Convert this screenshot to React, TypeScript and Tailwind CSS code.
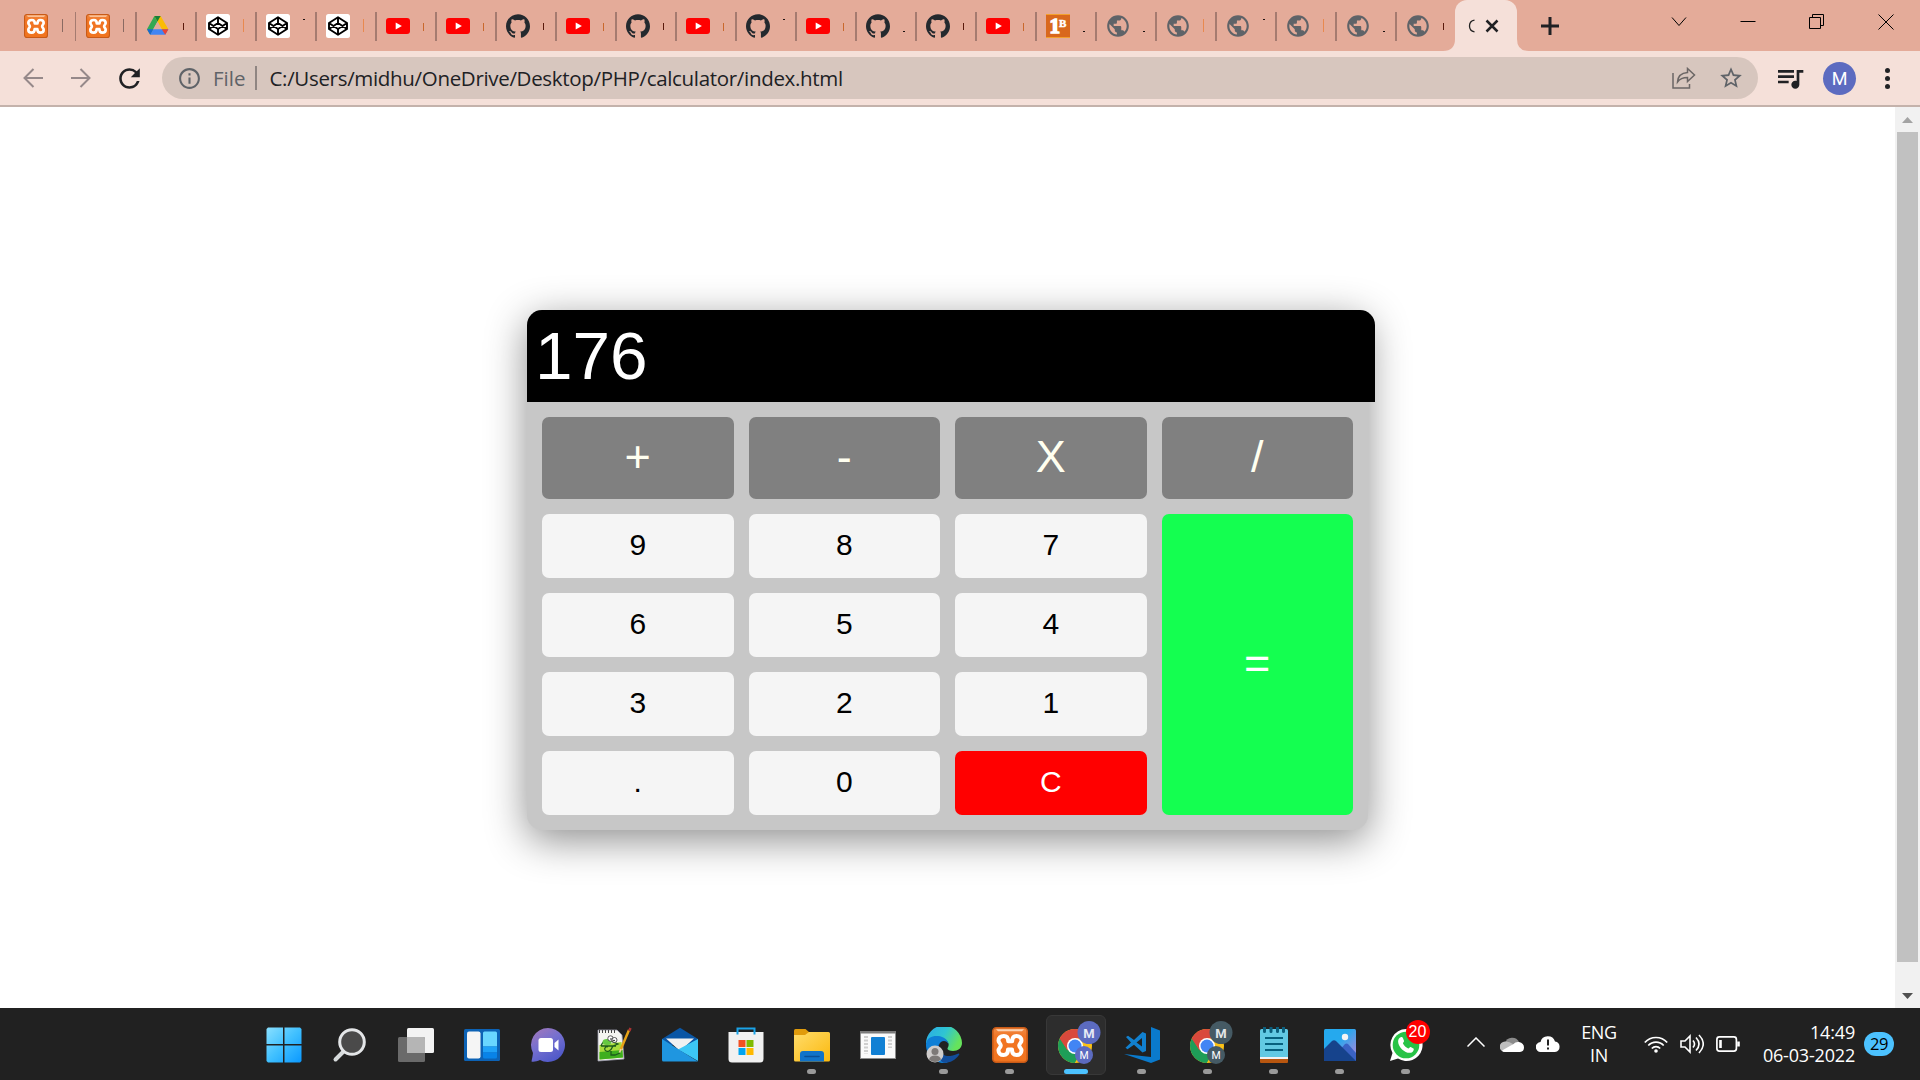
import React from "react";
import { SiGithub } from "react-icons/si";
import { MdPublic, MdQueueMusic, MdStarBorder, MdInfoOutline, MdRefresh } from "react-icons/md";

type Kind = "xampp" | "drive" | "codepen" | "youtube" | "github" | "bold" | "globe";

const slivers = {
  bar: "mt-[19px] h-[13px] w-px bg-[#8a6a62]",
  orangeBar: "mt-[19px] h-[13px] w-px bg-[#e8894f]",
  mid: "mt-[23px] h-[7px] w-px bg-[#5a1a0c]",
  orangeMid: "mt-[23px] h-[8px] w-px bg-[#c9682c]",
  dot: "mt-[31px] h-px w-[2px] bg-[#1c1210]",
  top: "mt-[19px] h-px w-[2px] bg-[#1c1210]",
};

const tabs: [Kind, keyof typeof slivers][] = [
  ["drive", "mid"],
  ["codepen", "orangeBar"],
  ["codepen", "top"],
  ["codepen", "orangeBar"],
  ["youtube", "orangeMid"],
  ["youtube", "orangeMid"],
  ["github", "mid"],
  ["youtube", "orangeMid"],
  ["github", "mid"],
  ["youtube", "orangeMid"],
  ["github", "top"],
  ["youtube", "orangeMid"],
  ["github", "dot"],
  ["github", "mid"],
  ["youtube", "orangeMid"],
  ["bold", "dot"],
  ["globe", "dot"],
  ["globe", "orangeBar"],
  ["globe", "top"],
  ["globe", "orangeBar"],
  ["globe", "dot"],
  ["globe", "mid"],
];

function Xampp({ large }: { large?: boolean }) {
  return (
    <svg viewBox="0 0 36 36" className={large ? "size-9" : "size-6"}>
      <defs>
        <linearGradient id="xa" x1="0" y1="0" x2="0" y2="1">
          <stop offset="0" stopColor="#f08a45" />
          <stop offset=".25" stopColor="#f27524" />
          <stop offset="1" stopColor="#f0741f" />
        </linearGradient>
      </defs>
      <rect x=".8" y=".8" width="34.4" height="34.4" rx="3.5" fill="url(#xa)" stroke="#c85a17" strokeWidth="1.6" />
      <path d="M4 2.200h28l-2 2H6z" fill="#fbd3b4" />
      <path
        d="M11.800 9C8.500 9 6.500 11 6.500 13.500c0 2.200 2.300 3 2.300 5s-2.300 2.500-2.300 5c0 2.500 2 4.500 5 4.500 3.500 0 4.500-2.300 4.500-5.500h4c0 3.200 1 5.500 4.500 5.500 3 0 5-2 5-4.500 0-2.500-2.300-3-2.300-5s2.300-2.800 2.300-5C29.500 11 27.500 9 24.500 9c-3.300 0-4.300 2-4.300 5.200h-4C16.200 11 15.200 9 11.800 9z"
        fill="none"
        stroke="#fff"
        strokeWidth="4"
        strokeLinejoin="round"
      />
    </svg>
  );
}

function Favicon({ kind }: { kind: Kind }) {
  switch (kind) {
    case "xampp":
      return <Xampp />;
    case "drive":
      return (
        <svg viewBox="0 0 24 24" className="size-6">
          <path d="M8.400 2h6.200l-3.100 5.400z" fill="#188038" />
          <path d="M8.400 2L1 15.200l3.200 5.600L11.600 7.400z" fill="#34a853" />
          <path d="M14.600 2H8.400l7.300 13.200h6.700z" fill="#fbbc04" />
          <path d="M8.400 2h6.200l-3.100 5.400z" fill="#188038" />
          <path d="M11.500 7.600L7.300 15.200h8.400z" fill="#e4ab99" />
          <path d="M7.300 15.200h15.100l-3.200 5.600H4.200z" fill="#4285f4" />
          <path d="M1 15.200h6.300L4.200 20.800z" fill="#1967d2" />
          <path d="M15.700 15.200h6.700l-3.200 5.600z" fill="#ea4335" />
        </svg>
      );
    case "codepen":
      return (
        <svg viewBox="0 0 24 24" className="size-6" fill="none" stroke="#000" strokeWidth="1.900" strokeLinejoin="round">
          <rect width="24" height="24" rx="2.500" fill="#fff" stroke="none" />
          <path d="M12 3.200l9 5.800v6l-9 5.800L3 15V9zM12 3.200v5.800M12 15v5.800M3 9l9 6 9-6M3 15l9-6 9 6" />
        </svg>
      );
    case "youtube":
      return (
        <svg viewBox="0 0 24 24" className="size-6">
          <rect y="4" width="24" height="16" rx="3" fill="#f00" />
          <path d="M9.700 8.600v6.900l6.200-3.450z" fill="#fff" />
        </svg>
      );
    case "github":
      return <SiGithub className="size-6 text-[#24292e]" />;
    case "bold":
      return (
        <span className="flex size-6 items-start justify-center border-y border-[#f3a02c] bg-[#d9681d] pt-px font-['Liberation_Serif',serif] font-bold text-white">
          <span className="text-[21px] leading-[21px] [-webkit-text-stroke:1.5px_white]">1</span>
          <span className="-ml-px mt-[2px] text-[11px] leading-[11px] [-webkit-text-stroke:0.5px_white]">B</span>
        </span>
      );
    default:
      return <MdPublic className="-ml-px size-[26px] shrink-0 text-[#5f6368]" />;
  }
}

function Tab({ kind, sliver, className }: { kind: Kind; sliver: keyof typeof slivers; className?: string }) {
  return (
    <div className={"flex shrink-0 overflow-hidden " + (className ?? "w-[60px]")}>
      <div className="mt-3 h-[29px] w-[1.5px] shrink-0 bg-[#a57b70]" />
      <div className="mt-[14px] ml-[9.500px] flex size-6 shrink-0 items-center justify-center">
        <Favicon kind={kind} />
      </div>
      <div className={"ml-[13px] shrink-0 " + slivers[sliver]} />
    </div>
  );
}

function TabStrip() {
  return (
    <div className="flex h-[51px] bg-[#e4ab99]">
      <div className="flex w-[74.500px] shrink-0">
        <div className="mt-[14px] ml-6">
          <Xampp />
        </div>
        <div className={"ml-[14px] " + slivers.bar} />
      </div>
      <Tab kind="xampp" sliver="bar" className="w-[60.500px]" />
      {tabs.map(([kind, sliver], i) => (
        <Tab key={i} kind={kind} sliver={sliver} />
      ))}
      <div className="-ml-3 flex w-[86px] shrink-0">
        <svg viewBox="0 0 12 51" className="w-3 shrink-0">
          <path d="M0 51Q12 51 12 39V51z" fill="#f5e0d9" />
        </svg>
        <div className="flex h-[51px] w-[62px] items-center rounded-t-xl bg-[#f5e0d9] pl-[13px]">
          <svg viewBox="0 0 7 14" className="h-[14px] w-[7px] shrink-0">
            <path d="M6.500 1.200Q1.500 2 1.500 7t5 5.800" fill="none" stroke="#222" strokeWidth="1.300" />
          </svg>
          <svg viewBox="0 0 14 14" className="ml-[10px] size-[14px] shrink-0">
            <path d="M1.500 1.500l11 11M12.500 1.500l-11 11" stroke="#202124" strokeWidth="2.500" />
          </svg>
        </div>
        <svg viewBox="0 0 12 51" className="w-3 shrink-0">
          <path d="M12 51Q0 51 0 39V51z" fill="#f5e0d9" />
        </svg>
      </div>
      <svg viewBox="0 0 18 18" className="mt-[16.500px] ml-[11.500px] size-[18px] shrink-0">
        <path d="M9 0v18M0 9h18" stroke="#202124" strokeWidth="3" />
      </svg>
      <div className="mt-[14px] mr-[26px] ml-auto flex h-4 shrink-0 gap-[53px] text-black">
        <svg viewBox="0 0 16 16" className="size-4" fill="none" stroke="currentColor">
          <path d="M1 3.500l7 8 7-8" />
        </svg>
        <svg viewBox="0 0 16 16" className="size-4" fill="none" stroke="currentColor">
          <path d="M.5 7.500h15" />
        </svg>
        <svg viewBox="0 0 16 16" className="size-4" fill="none" stroke="currentColor">
          <path d="M.5 3.500h11v11h-11zM3.500 3.500v-3h11v11h-3" />
        </svg>
        <svg viewBox="0 0 16 16" className="size-4" fill="none" stroke="currentColor">
          <path d="M.5.5l15 15M15.500.5l-15 15" />
        </svg>
      </div>
    </div>
  );
}

function Toolbar() {
  return (
    <div className="flex h-14 items-center border-b-2 border-[#c4b2ab] bg-[#f5e0d9]">
      <svg viewBox="0 0 20 20" className="ml-[23px] size-5" fill="none" stroke="#96898a" strokeWidth="2">
        <path d="M20 10H2M10.500 1L1.500 10l9 9" />
      </svg>
      <svg viewBox="0 0 20 20" className="ml-7 size-5" fill="none" stroke="#96898a" strokeWidth="2">
        <path d="M0 10h18M9.500 1l9 9-9 9" />
      </svg>
      <MdRefresh className="ml-[23px] size-[31px] text-[#202124]" />
      <div className="ml-[17px] flex h-[42px] w-[1596px] items-center rounded-full bg-[#d7c6be] font-['Open_Sans',sans-serif] text-[20.500px]">
        <MdInfoOutline className="ml-[15px] size-[25px] text-[#5f6368]" />
        <span className="ml-[11px] w-[31px] whitespace-nowrap text-[#5f6368]">File</span>
        <span className="ml-[11px] h-6 w-[1.500px] bg-[#8f8582]" />
        <span className="ml-[13px] tracking-[-0.320px] text-[#202124]">C:/Users/midhu/OneDrive/Desktop/PHP/calculator/index.html</span>
        <svg viewBox="0 0 24 22" className="ml-auto h-[22px] w-6" fill="none" stroke="#6b6665" strokeWidth="1.500">
          <path d="M1 6v15h16.500v-4" />
          <path d="M15.500 1.500v4C9 6 5.800 10 5.500 15c2.500-3.500 5.500-4.500 10-4.500v4L22.500 8z" />
        </svg>
        <MdStarBorder className="mr-[14px] ml-[22px] size-[26px] text-[#5f6368]" />
      </div>
      <MdQueueMusic className="ml-4 size-8 text-[#202124]" />
      <div className="ml-[17px] grid size-[33px] place-items-center rounded-full bg-[#5c6bc0] font-[Roboto,sans-serif] text-[18px] text-white">M</div>
      <div className="ml-[28.500px] flex flex-col gap-[3px]">
        <i className="size-[5px] rounded-full bg-[#202124]" />
        <i className="size-[5px] rounded-full bg-[#202124]" />
        <i className="size-[5px] rounded-full bg-[#202124]" />
      </div>
    </div>
  );
}

function Calculator() {
  const digit = "rounded-[7px] bg-[#f5f5f5] pb-[2px] text-[30px] leading-none text-black";
  return (
    <div className="mt-[203px] ml-[527px] h-[520px] w-[841px] rounded-[15px] bg-[#c7c7c7] font-['Liberation_Sans',Arial,sans-serif] shadow-[0_10px_40px_rgba(0,0,0,0.45)]">
      <div className="flex h-[92px] w-[848px] items-center rounded-t-[15px] bg-black pl-[8px] text-[67.500px] leading-none text-white">
        <span>176</span>
      </div>
      <div className="grid grid-cols-4 grid-rows-[82px_64px_64px_64px_64px] gap-[15px] p-[15px]">
        {["+", "-", "X", "/"].map((op) => (
          <button key={op} className="rounded-[7px] bg-[#808080] pb-[3px] text-[45px] leading-none text-[#fffff0]">
            {op}
          </button>
        ))}
        {["9", "8", "7"].map((n) => (
          <button key={n} className={digit}>{n}</button>
        ))}
        <button className="row-span-4 rounded-[7px] bg-[#14ff50] pb-[4px] text-[45px] leading-none text-white">=</button>
        {["6", "5", "4", "3", "2", "1", ".", "0"].map((n) => (
          <button key={n} className={digit}>{n}</button>
        ))}
        <button className="rounded-[7px] bg-[#ff0000] pb-[2px] text-[30px] leading-none text-white">C</button>
      </div>
    </div>
  );
}

function ScrollBar() {
  return (
    <div className="flex h-full w-[25px] shrink-0 flex-col items-center bg-[#f1f1f1]">
      <svg viewBox="0 0 11 6" className="mt-[10px] h-[6px] w-[11px]">
        <path d="M0 6L5.500 0 11 6z" fill="#a3a3a3" />
      </svg>
      <div className="mt-[9px] h-[830px] w-[21px] bg-[#c1c1c1]" />
      <svg viewBox="0 0 11 6" className="mt-[31px] h-[6px] w-[11px]">
        <path d="M0 0L5.500 6 11 0z" fill="#505050" />
      </svg>
    </div>
  );
}

function ChromeIcon({ color }: { color: string }) {
  return (
    <svg viewBox="0 0 44 46" className="-mt-[9px] ml-[7px] h-[46px] w-11 shrink-0">
      <clipPath id="cc"><circle cx="18" cy="28" r="17" /></clipPath>
      <g clipPath="url(#cc)">
        <rect x="1" y="10" width="34" height="36" fill="#fbc116" />
        <path d="M18 28L10.500 32 2 17.500 -2 40 16 48 26 31z" fill="#1e9e58" />
        <path d="M1 18L10.500 32.500 18 20.500H36V8H0z" fill="#d9493c" />
      </g>
      <circle cx="18" cy="28" r="8" fill="#fff" />
      <circle cx="18" cy="28" r="6.500" fill="#4285f4" />
      <circle cx="32" cy="14.500" r="11.500" fill={color} />
      <circle cx="27" cy="37" r="9" fill={color} />
      <g fill="#fff" textAnchor="middle" fontFamily="Roboto, sans-serif">
        <text x="32" y="19.500" fontSize="13" fontWeight="700" opacity=".85">M</text>
        <text x="27" y="41" fontSize="10.500">M</text>
      </g>
    </svg>
  );
}

const appIcons: Record<string, React.ReactNode> = {
  start: (
    <svg viewBox="0 0 36 36" className="size-9">
      <defs>
        <linearGradient id="win" x1="0" y1="0" x2="1" y2="1">
          <stop offset="0" stopColor="#8ae0ff" />
          <stop offset=".5" stopColor="#40c0ff" />
          <stop offset="1" stopColor="#0a98ff" />
        </linearGradient>
      </defs>
      <path d="M2 .5h15v16.500H.5V2zM18.500.5H34l1.500 1.500v15h-17zM.5 18.500H17v17H2L.5 34zM18.500 18.500h17V34L34 35.500H18.500z" fill="url(#win)" />
    </svg>
  ),
  search: (
    <svg viewBox="0 0 36 36" className="size-9">
      <path d="M12 24L3.500 32.500" stroke="#d6dadb" strokeWidth="4" strokeLinecap="round" />
      <circle cx="20" cy="15" r="12.300" fill="#4a4a4a" stroke="#e4e6e8" strokeWidth="3" />
    </svg>
  ),
  taskview: (
    <svg viewBox="0 0 36 36" className="size-9">
      <rect x="9" y="1" width="27" height="25" rx="1.500" fill="#f3f3f3" />
      <rect x="0" y="10" width="27" height="25" rx="1.500" fill="#6a6a6a" />
      <path d="M9 10h16.500q1.500 0 1.500 1.500V26H9z" fill="#b5b5b5" />
    </svg>
  ),
  widgets: (
    <svg viewBox="0 0 36 36" className="size-9">
      <rect y="2" width="36" height="32" rx="1.500" fill="#0c62b5" />
      <rect x="3" y="4.500" width="13.500" height="27" rx="2" fill="#f5f5f5" />
      <path d="M19 6q0-1.500 1.500-1.500H31.500q1.500 0 1.500 1.500v13.500H19z" fill="#69d6ff" />
      <path d="M19 19.500h14v6H19z" fill="#1fa1f7" />
      <path d="M19 25.500h14V30q0 1.500-1.500 1.500h-11Q19 31.500 19 30z" fill="#0883e8" />
    </svg>
  ),
  chat: (
    <svg viewBox="0 0 36 36" className="size-9">
      <defs>
        <linearGradient id="ch" x1="0" y1="0" x2=".6" y2="1">
          <stop offset="0" stopColor="#a678b8" />
          <stop offset=".5" stopColor="#7670cf" />
          <stop offset="1" stopColor="#5059c9" />
        </linearGradient>
      </defs>
      <path d="M18 1a17 17 0 1 1-8 32C7 34.500 3.500 35 1.500 34.500 2 32 2.500 29.500 3 26A17 17 0 0 1 18 1z" fill="url(#ch)" />
      <rect x="8.500" y="11" width="14.500" height="14" rx="2.500" fill="#fff" />
      <path d="M24.500 16l4-3.500v11l-4-3.500z" fill="#fff" />
    </svg>
  ),
  npp: (
    <svg viewBox="0 0 36 36" className="size-9">
      <path d="M2 3h19l5 5 2 24-26 2z" fill="#f4f4f0" stroke="#99a" strokeWidth=".8" />
      <path d="M3 4.500h17" stroke="#444" strokeWidth="3" strokeDasharray="1 2" />
      <path d="M3.500 18l22-3 1.500 15.500-23.500 2z" fill="#a8dc3c" />
      <path d="M3.500 25l23-2 .5 7.500-23.500 2z" fill="#3fae1e" />
      <path d="M5 19c2-6 8-8 12-4l5 2-5 2c-2 5-6 7-8 4-1-2 1-4 3-3M5 19h15M15 24v4h4l5-2" fill="none" stroke="#1c5b1c" strokeWidth="1.300" />
      <ellipse cx="11" cy="15" rx="4.500" ry="3" fill="#65c840" />
      <circle cx="14.500" cy="11.500" r="2.700" fill="#fff" stroke="#333" strokeWidth=".8" />
      <circle cx="18.500" cy="13" r="2.500" fill="#fff" stroke="#333" strokeWidth=".8" />
      <circle cx="15" cy="12" r=".8" /><circle cx="18" cy="13.500" r=".8" />
      <path d="M33 3l-8.500 20" stroke="#e8a317" strokeWidth="2.500" />
      <path d="M34.500 1l-1.200 3" stroke="#a33" strokeWidth="2.500" />
      <path d="M25 22l-1.500 3.500" stroke="#ecd2a0" strokeWidth="1.800" />
    </svg>
  ),
  mail: (
    <svg viewBox="0 0 36 36" className="size-9">
      <path d="M0 12L18 .8 36 12v6H0z" fill="#0a56a5" />
      <path d="M4 11.500h28L18 24z" fill="#f1f1f1" />
      <path d="M36 12v22L16 22.500z" fill="#3cc7f5" />
      <path d="M0 12l36 22.500H1.500Q0 34.500 0 33z" fill="#1f96e0" />
    </svg>
  ),
  store: (
    <svg viewBox="0 0 36 36" className="size-9">
      <path d="M.5 5h35v27q0 3.500-3.500 3.500H4Q.5 35.500.5 32z" fill="#f1f1f1" />
      <path d="M9.500 7.500V1.500h17v6" fill="none" stroke="#1aa3e8" strokeWidth="2" />
      <path d="M10.500 13h7v7h-7z" fill="#f25022" />
      <path d="M18.500 13h7v7h-7z" fill="#7fba00" />
      <path d="M10.500 21h7v7h-7z" fill="#00a4ef" />
      <path d="M18.500 21h7v7h-7z" fill="#ffb900" />
    </svg>
  ),
  explorer: (
    <svg viewBox="0 0 36 36" className="size-9">
      <defs>
        <linearGradient id="fo" x1="0" y1="0" x2="1" y2="1">
          <stop offset="0" stopColor="#ffdc6b" />
          <stop offset="1" stopColor="#fbb90e" />
        </linearGradient>
      </defs>
      <path d="M0 3.500Q0 2 1.500 2h10l4 3.500V10H0z" fill="#e09b0c" />
      <path d="M0 8h11l4-3h19.500Q36 5 36 6.500V33q0 1.500-1.500 1.500h-33Q0 34.500 0 33z" fill="url(#fo)" />
      <path d="M6 34.500V27q0-3 3-3h18q3 0 3 3v7.500z" fill="#1173c9" />
      <path d="M11 29.500h14" stroke="#0b4f96" strokeWidth="1.600" strokeLinecap="round" />
    </svg>
  ),
  window: (
    <svg viewBox="0 0 36 36" className="size-9">
      <rect x=".5" y="4.500" width="35" height="27" fill="#fafafa" stroke="#8c8c8c" />
      <path d="M0 4h36v2.500H0z" fill="#7b7b7b" />
      <rect x="11" y="10" width="14" height="18" rx="1" fill="#1180d4" />
      <path d="M6 9v18M30 9v12" stroke="#cfcfcf" strokeWidth="4" strokeDasharray="2 1.500" />
    </svg>
  ),
  edge: (
    <svg viewBox="0 0 36 36" className="size-9">
      <defs>
        <linearGradient id="ed" x1="0" y1="0" x2="1" y2=".4">
          <stop offset="0" stopColor="#2aa9e8" />
          <stop offset=".55" stopColor="#2fc5d2" />
          <stop offset="1" stopColor="#66e35c" />
        </linearGradient>
      </defs>
      <path d="M0 17a18 18 0 0 1 36-1c0 5-4 8-9 8-3.500 0-6-1.200-5.500-2.500C22 20 23 19 22.500 16.500 21 11 9 6 0 17z" fill="url(#ed)" />
      <path d="M0 17C1 10 7 8.500 12 9c6 .5 10 4 10.500 8-2-4-8-4-9.500 1-2 6 2 15 9 17.500A18 18 0 0 1 0 17z" fill="#0f7fd6" />
      <path d="M13 17c-2 7 4 12.500 11 12 4-.3 7-2 8.500-2.500 1 0 1 .8.500 1.500-4 6-11 8.500-16 7.500C11 31 9 22 13 17z" fill="#124d9b" />
      <circle cx="9" cy="27" r="8.500" fill="#cfcccb" />
      <circle cx="9" cy="24.500" r="3.500" fill="#7d7977" />
      <path d="M3 32.500q1-4 6-4t6 4q-6 5-12 0z" fill="#7d7977" />
    </svg>
  ),
  xampp: <Xampp large />,
  chrome: <ChromeIcon color="#5c6bc0" />,
  vscode: (
    <svg viewBox="0 0 36 36" className="size-9">
      <path d="M27 0l9 3.500v29L27 36 0 27l27 3z" fill="#0a7acc" />
      <path d="M18.500 5L10 13 4 8.800 2 10l5 5.500-5.500 5.300 2 1.400L10 17.800l8.500 7.700 3.500-1.500V6.500zM18 11v8.500L12.500 15.500z" fill="#1180cf" fillRule="evenodd" />
    </svg>
  ),
  chrome2: <ChromeIcon color="#455a64" />,
  notepad: (
    <svg viewBox="0 0 36 36" className="size-9">
      <rect x="4" y="30" width="28" height="6" rx="1" fill="#b8560f" />
      <rect x="4" y="28" width="28" height="4" fill="#f2f2f2" />
      <path d="M4 3.500Q4 2 5.500 2h25Q32 2 32 3.500V30H4z" fill="#62c9e3" />
      <path d="M9 11h18M9 17h18M9 23h18" stroke="#06617f" strokeWidth="1.800" />
      <path d="M8.500 0v4.500M15 0v4.500M21.500 0v4.500M27.500 0v4.500" stroke="#0b5e7c" strokeWidth="3" strokeLinecap="round" />
    </svg>
  ),
  photos: (
    <svg viewBox="0 0 36 36" className="size-9">
      <defs>
        <linearGradient id="ph" x1="0" y1="0" x2="1" y2="1">
          <stop offset=".4" stopColor="#25a9ee" />
          <stop offset=".8" stopColor="#8a8fe0" />
        </linearGradient>
      </defs>
      <rect x="2" y="2" width="32" height="32" rx="1.500" fill="url(#ph)" />
      <path d="M17 24l6-7q1.500-1 3 0l8 9v8H20z" fill="#3a62c4" />
      <path d="M2 22l8-8q2-1.500 4 0l20 20H2z" fill="#16438c" />
      <circle cx="23" cy="10" r="3.200" fill="#f4f4f4" />
    </svg>
  ),
  whatsapp: (
    <span className="relative size-9">
      <svg viewBox="0 0 36 36" className="size-9">
        <path d="M18 2a16 16 0 1 1-8 29.500L2 34l2.500-8A16 16 0 0 1 18 2z" fill="#fff" />
        <circle cx="18" cy="18" r="13.300" fill="#27c346" />
        <path d="M12 10.500c1.500-1 2.500-.5 3 .8l1 2.400c.4 1-1.300 2-1 2.700 1 2.200 3 4 5.200 5 .8.300 1.600-1.600 2.500-1.300l2.700 1.300c1 .6 0 3.600-2.500 4.300-5 1.200-12.500-5-12.800-11 0-2 .9-3.500 1.900-4.200z" fill="#fff" />
      </svg>
      <span className="absolute -top-[7px] -right-[6px] grid size-6 place-items-center rounded-full bg-[#ff0000] font-['Liberation_Sans',sans-serif] text-[16px] leading-none text-white">20</span>
    </span>
  ),
};

const running = ["explorer", "edge", "xampp", "vscode", "chrome2", "notepad", "photos", "whatsapp"];

function Taskbar() {
  return (
    <div className="flex h-[72px] bg-[#212121] font-['Open_Sans',sans-serif] text-white">
      <div className="ml-[250.500px] flex shrink-0">
        {Object.keys(appIcons).map((name) => (
          <div key={name} className="flex w-[66px] justify-center pt-[7px]">
            <div className={"flex h-[60px] w-[60px] flex-col items-center rounded-md " + (name === "chrome" ? "border border-[#383838] bg-[#2d2d2d] pt-[11px]" : "pt-3")}>
              <div className="flex size-9 shrink-0 items-start justify-center">{appIcons[name]}</div>
              {name === "chrome" && <i className="mt-[6px] h-[5px] w-6 shrink-0 rounded-full bg-[#4cc2ff]" />}
              {running.includes(name) && <i className="mt-[6px] h-[5px] w-[9px] shrink-0 rounded-full bg-[#9a9a9a]" />}
            </div>
          </div>
        ))}
      </div>
      <div className="ml-[28.500px] flex h-[72px] items-center">
        <svg viewBox="0 0 18 10" className="mb-1 h-[10px] w-[18px]" fill="none" stroke="#fff" strokeWidth="1.500">
          <path d="M.5 9.500L9 1l8.500 8.500" />
        </svg>
        <svg viewBox="0 0 24 16" className="ml-[15px] h-4 w-6">
          <path d="M5 7a7.500 7.500 0 0 1 14-1l-7 6z" fill="#8b8b8b" />
          <path d="M5 16A5 5 0 0 1 5 5.500q4-.5 8 2.500l-7 8z" fill="#bdbdbd" />
          <path d="M2 14.500L13.500 8q2-2.500 5.500-2 5 1 5 5.500 0 4-4 4.500H5q-2 0-3-1.500z" fill="#fff" />
        </svg>
        <svg viewBox="0 0 24 16" className="ml-3 h-4 w-6">
          <path d="M5 16A5 5 0 0 1 4.500 6 7.500 7.500 0 0 1 19 5.500 5.300 5.300 0 0 1 19 16z" fill="#fff" />
          <path d="M12 3.500v6M12 11.500v2" stroke="#212121" strokeWidth="2" />
        </svg>
        <div className="ml-[19px] w-10 text-center text-[18px] leading-[23px] tracking-[-0.3px]">
          <div>ENG</div>
          <div>IN</div>
        </div>
        <svg viewBox="0 0 24 18" className="ml-[25px] h-[18px] w-6" fill="none" stroke="#fff" strokeWidth="1.700">
          <path d="M.8 7.500a15 15 0 0 1 22.400 0M4.300 10.500a10.500 10.500 0 0 1 15.400 0M7.800 13.500a5.800 5.800 0 0 1 8.400 0" />
          <circle cx="12" cy="16" r="1.800" fill="#fff" stroke="none" />
        </svg>
        <svg viewBox="0 0 24 20" className="ml-3 h-5 w-6" fill="none" stroke="#fff" strokeWidth="1.600">
          <path d="M1 7h4l5-5v16l-5-5H1zM13 6.500q3 3.500 0 7M16 3.500q6 6.500 0 13M19 1q8.500 9 0 18" />
        </svg>
        <svg viewBox="0 0 24 16" className="ml-3 h-4 w-6" fill="none" stroke="#fff" strokeWidth="1.700">
          <rect x=".9" y=".9" width="19.500" height="14.200" rx="2.500" />
          <path d="M22.500 5.500v5M4.500 4v8" strokeWidth="2.600" />
        </svg>
        <div className="ml-2 w-[107px] text-right text-[18px] leading-[23px] tracking-[-0.180px] whitespace-nowrap">
          <div>14:49</div>
          <div>06-03-2022</div>
        </div>
        <div className="ml-[9px] grid h-6 w-[30px] place-items-center rounded-full bg-[#4cc2ff] text-[16.500px] leading-none tracking-[-0.5px] text-black">29</div>
      </div>
    </div>
  );
}

export default function App() {
  return (
    <div className="flex h-[1080px] w-[1920px] flex-col overflow-hidden bg-white">
      <TabStrip />
      <Toolbar />
      <div className="flex h-[901px]">
        <div className="flex-1 overflow-hidden">
          <Calculator />
        </div>
        <ScrollBar />
      </div>
      <Taskbar />
    </div>
  );
}
